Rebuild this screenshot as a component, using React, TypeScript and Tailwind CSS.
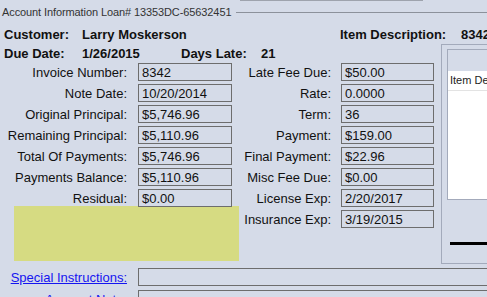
const leftFields = [
  ["Invoice Number:", "8342"],
  ["Note Date:", "10/20/2014"],
  ["Original Principal:", "$5,746.96"],
  ["Remaining Principal:", "$5,110.96"],
  ["Total Of Payments:", "$5,746.96"],
  ["Payments Balance:", "$5,110.96"],
  ["Residual:", "$0.00"],
];

const rightFields = [
  ["Late Fee Due:", "$50.00"],
  ["Rate:", "0.0000"],
  ["Term:", "36"],
  ["Payment:", "$159.00"],
  ["Final Payment:", "$22.96"],
  ["Misc Fee Due:", "$0.00"],
  ["License Exp:", "2/20/2017"],
  ["Insurance Exp:", "3/19/2015"],
];

function Field({ label, value, labelClass, boxClass }: { label: string; value: string; labelClass: string; boxClass: string }) {
  return (
    <div className="flex items-center h-[18px] mb-[3px]">
      <span className={`${labelClass} text-right whitespace-nowrap`}>{label}</span>
      <div className={`${boxClass} h-full border border-[#6d6d6d] flex items-center px-[3px] whitespace-nowrap`}>{value}</div>
    </div>
  );
}

export default function App() {
  return (
    <div className="w-[487px] h-[297px] overflow-hidden bg-[#d5dbe8] font-['Liberation_Sans',Arial,sans-serif] text-[13px] leading-none text-[#111]">
      <div className="w-[540px]">
        <div className="h-px ml-[240px] w-[183px] bg-[#9ea3ad]" />

        {/* group title */}
        <div className="h-[23px] flex items-center">
          <span className="pl-[2px] text-[11px] tracking-[-0.1px] text-[#333] whitespace-nowrap">Account Information Loan# 13353DC-65632451</span>
          <div className="flex-1 h-px bg-[#8c919b] ml-[5px]" />
        </div>

        <div className="h-[20px] flex items-center font-bold whitespace-nowrap">
          <span className="pl-[4px] w-[82px]">Customer:</span>
          <span className="w-[258px]">Larry Moskerson</span>
          <span className="w-[121px]">Item Description:</span>
          <span>8342</span>
        </div>

        <div className="flex h-[220px]">
          <div className="w-[441px] shrink-0">
            <div className="h-[18px] flex items-center font-bold whitespace-nowrap">
              <span className="pl-[4px] w-[82px]">Due Date:</span>
              <span className="w-[99px]">1/26/2015</span>
              <span className="w-[80px]">Days Late:</span>
              <span>21</span>
            </div>
            <div className="flex mt-px">
              <div className="w-[239px]">
                {leftFields.map(([l, v]) => (
                  <Field key={l} label={l} value={v} labelClass="w-[127px]" boxClass="ml-[11px] w-[94px]" />
                ))}
                <div className="-mt-[4px] ml-[14px] w-[225px] h-[55px] bg-[#d6db82]" />
              </div>
              <div className="w-[202px]">
                {rightFields.map(([l, v]) => (
                  <Field key={l} label={l} value={v} labelClass="w-[92px]" boxClass="ml-[10px] w-[93px]" />
                ))}
              </div>
            </div>
          </div>

          {/* item description panel */}
          <div className="flex-1 border-l border-t border-b border-[#a3aabb] pl-[5px] pt-[4px] flex flex-col">
            <div className="h-[151px] border-l border-t border-b border-[#a3aabb] flex flex-col">
              <div className="h-[21px]" />
              <div className="flex-1 bg-white">
                <div className="h-[20px] border-b border-[#e3e3e3] flex items-center pl-[2px] text-[11px] text-[#222] whitespace-nowrap">Item Description</div>
              </div>
            </div>
            <div className="mt-[42px] ml-[3px] h-[3px] bg-black" />
          </div>
        </div>

        <div className="mt-[4px] flex items-center h-[18px]">
          <span className="w-[127px] text-right text-[#1515f0] underline whitespace-nowrap">Special Instructions:</span>
          <div className="ml-[11px] flex-1 h-full border border-[#6d6d6d]" />
        </div>
        <div className="mt-[4px] flex items-center h-[18px]">
          <span className="w-[127px] text-right text-[#1515f0] underline whitespace-nowrap">Account Note:</span>
          <div className="ml-[11px] flex-1 h-full border border-[#6d6d6d]" />
        </div>
      </div>
    </div>
  );
}
